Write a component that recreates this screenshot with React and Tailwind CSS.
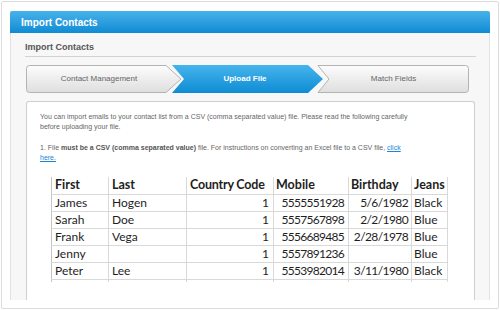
const rows = [
  ['James', 'Hogen', '1', '5555551928', '5/6/1982', 'Black'],
  ['Sarah', 'Doe', '1', '5557567898', '2/2/1980', 'Blue'],
  ['Frank', 'Vega', '1', '5556689485', '2/28/1978', 'Blue'],
  ['Jenny', '', '1', '5557891236', '', 'Blue'],
  ['Peter', 'Lee', '1', '5553982014', '3/11/1980', 'Black'],
];

const StepBar = () => (
  <div className="relative h-[28px] w-[443px]">
    <svg className="absolute inset-0" width="443" height="28" viewBox="0 0 443 28">
      <defs>
        <linearGradient id="grey" x1="0" y1="0" x2="0" y2="1">
          <stop offset="0" stopColor="#fdfdfd" />
          <stop offset="1" stopColor="#dedede" />
        </linearGradient>
        <linearGradient id="blue" x1="0" y1="0" x2="0" y2="1">
          <stop offset="0" stopColor="#46b4ec" />
          <stop offset="1" stopColor="#0e8cd3" />
        </linearGradient>
      </defs>
      <path d="M3.5,0.5 H140 L155,14 L140,27.5 H3.5 Q0.5,27.5 0.5,24.5 V3.5 Q0.5,0.5 3.5,0.5 Z" fill="url(#grey)" stroke="#b3b3b3" />
      <path d="M146,0 H282 L297,14 L282,28 H146 L158,14 Z" fill="url(#blue)" />
      <path d="M292,0.5 H439.5 Q442.5,0.5 442.5,3.5 V24.5 Q442.5,27.5 439.5,27.5 H292 L303,14 Z" fill="url(#grey)" stroke="#b3b3b3" />
    </svg>
    <div className="relative flex h-full items-center text-[8px]">
      <div className="w-[146px] text-center text-[#666]">Contact Management</div>
      <div className="w-[146px] text-center font-bold text-white">Upload File</div>
      <div className="w-[151px] text-center text-[#666]">Match Fields</div>
    </div>
  </div>
);

const cell = 'border-b border-r border-[#d9d9d9] overflow-visible whitespace-nowrap';

const Sheet = () => (
  <table className="ml-[24px] mt-[14px] table-fixed border-collapse text-[12px] leading-[16px] text-[#1e1e1e]" style={{ fontFamily: 'Lato, "Liberation Sans", sans-serif' }}>
    <colgroup>
      <col className="w-[57px]" />
      <col className="w-[78px]" />
      <col className="w-[87px]" />
      <col className="w-[75px]" />
      <col className="w-[63px]" />
      <col className="w-[36px]" />
    </colgroup>
    <thead>
      <tr className="h-[17px] text-[12.5px] font-bold">
        <td className={`${cell} border-l border-l-[#c4c4c4] px-[3px]`}>First</td>
        <td className={`${cell} px-[3px]`}>Last</td>
        <td className={`${cell} px-[3px] tracking-[-0.2px]`}>Country Code</td>
        <td className={`${cell} px-[2px]`}>Mobile</td>
        <td className={`${cell} px-[2px]`}>Birthday</td>
        <td className={`${cell} px-[2px]`}>Jeans</td>
      </tr>
    </thead>
    <tbody>
      {rows.map((r) => (
        <tr key={r[0]} className="h-[17px]">
          <td className={`${cell} border-l border-l-[#c4c4c4] px-[3px]`}>{r[0]}</td>
          <td className={`${cell} px-[3px]`}>{r[1]}</td>
          <td className={`${cell} px-[4px] text-right`}>{r[2]}</td>
          <td className={`${cell} px-[4px] text-right tracking-[-0.7px]`}>{r[3]}</td>
          <td className={`${cell} px-[3px] text-right tracking-[-0.6px]`}>{r[4]}</td>
          <td className={`${cell} px-[2px]`}>{r[5]}</td>
        </tr>
      ))}
      <tr className="h-[3px]">
        <td className="border-l border-r border-[#d9d9d9] border-l-[#c4c4c4]" />
        <td className="border-r border-[#d9d9d9]" />
        <td className="border-r border-[#d9d9d9]" />
        <td className="border-r border-[#d9d9d9]" />
        <td className="border-r border-[#d9d9d9]" />
        <td className="border-r border-[#d9d9d9]" />
      </tr>
    </tbody>
  </table>
);

export default function App() {
  return (
    <div className="h-[310px] w-[500px] bg-white p-px" style={{ fontFamily: '"Liberation Sans", Arial, sans-serif' }}>
      <div className="h-full rounded-[2px] border border-[#dcdcdc] px-[8px] pt-[9px]">
        <div className="flex h-[289px] flex-col overflow-hidden">
          {/* header */}
          <div className="h-[22px] shrink-0 rounded-t-[2px] bg-gradient-to-b from-[#45b2ea] to-[#0b8bd3] pl-[11px] pt-[1px] text-[10px] font-bold leading-[22px] text-white">
            Import Contacts
          </div>

          <div className="flex flex-1 flex-col border-l border-r border-[#e2e2e2] bg-[#f7f7f7] pl-[14px] pr-[14px] pt-[8px]">
            <div className="mr-[-1px] border-b border-[#d2d2d2] pb-[3px] text-[9px] font-bold leading-[12px] text-[#555]">
              Import Contacts
            </div>

            <div className="mt-[8px] pl-px">
              <StepBar />
            </div>

            <div className="mt-[8px] flex-1 rounded-t-[3px] border border-b-0 border-[#cfcfcf] bg-white ml-px">
              <div className="pl-[13px] pt-[10px] text-[7px] leading-[10px] text-[#666]">
                <p>
                  You can import emails to your contact list from a CSV (comma separated value) file. Please read the following carefully
                  <br />
                  before uploading your file.
                </p>
                <p className="mt-[11px]">
                  1. File <span className="font-bold text-[#555]">must be a CSV (comma separated value)</span> file. For instructions on converting an Excel file to a CSV file,{' '}
                  <a href="#" className="text-[#1a86d6] underline">click</a>
                  <br />
                  <a href="#" className="text-[#1a86d6] underline">here.</a>
                </p>
              </div>
              <Sheet />
            </div>
          </div>
        </div>
      </div>
    </div>
  );
}
